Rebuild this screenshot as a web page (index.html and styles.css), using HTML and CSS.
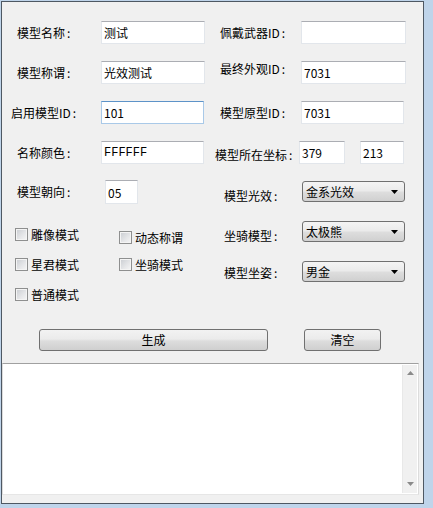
FILE: index.html
```html
<!DOCTYPE html>
<html lang="zh-CN">
<head>
<meta charset="utf-8">
<title>模型生成</title>
<link rel="stylesheet" href="styles.css">
</head>
<body>
<div class="win">
  <div class="cols">
    <div class="col col-left">
      <div class="row"><span class="lbl">模型名称<i class="colon">:</i></span><input class="field w104" value="测试"></div>
      <div class="row"><span class="lbl">模型称谓<i class="colon">:</i></span><input class="field w104" value="光效测试"></div>
      <div class="row"><span class="lbl lbl-wide">启用模型ID<i class="colon">:</i></span><input class="field w103 focus" value="101"></div>
      <div class="row"><span class="lbl">名称颜色<i class="colon">:</i></span><input class="field w103 mono" value="FFFFFF"></div>
      <div class="row"><span class="lbl m7">模型朝向<i class="colon">:</i></span><input class="field small" value="05"></div>
      <div class="checks">
        <label class="chk"><span class="box"></span>雕像模式</label>
        <label class="chk low"><span class="box"></span>动态称谓</label>
        <label class="chk"><span class="box"></span>星君模式</label>
        <label class="chk"><span class="box"></span>坐骑模式</label>
        <label class="chk"><span class="box"></span>普通模式</label>
      </div>
    </div>
    <div class="col col-right">
      <div class="row"><span class="rlbl">佩戴武器ID<i class="colon">:</i></span><input class="field w105" value=""></div>
      <div class="row"><span class="rlbl m4">最终外观ID<i class="colon">:</i></span><input class="field w105" value="7031"></div>
      <div class="row"><span class="rlbl">模型原型ID<i class="colon">:</i></span><input class="field w103" value="7031"></div>
      <div class="row"><span class="rlbl coord m10">模型所在坐标<i class="colon">:</i></span><input class="field w46" value="379"><input class="field w44 gap15" value="213"></div>
      <div class="row"><span class="rlbl sel m11">模型光效<i class="colon">:</i></span><div class="combo"><span>金系光效</span><svg class="arrow" width="7" height="4" viewBox="0 0 7 4"><path d="M0 0h7L3.5 4z" fill="#000"/></svg></div></div>
      <div class="row"><span class="rlbl sel m11">坐骑模型<i class="colon">:</i></span><div class="combo"><span>太极熊</span><svg class="arrow" width="7" height="4" viewBox="0 0 7 4"><path d="M0 0h7L3.5 4z" fill="#000"/></svg></div></div>
      <div class="row"><span class="rlbl sel m8">模型坐姿<i class="colon">:</i></span><div class="combo"><span>男金</span><svg class="arrow" width="7" height="4" viewBox="0 0 7 4"><path d="M0 0h7L3.5 4z" fill="#000"/></svg></div></div>
    </div>
  </div>
  <div class="actions">
    <button class="btn btn-gen">生成</button>
    <button class="btn btn-clear">清空</button>
  </div>
  <div class="output">
    <div class="text"></div>
    <div class="scroll">
      <svg width="7" height="4" viewBox="0 0 7 4"><path d="M3.5 0L7 4H0z" fill="#8a8a8a"/></svg>
      <svg width="7" height="4" viewBox="0 0 7 4"><path d="M0 0h7L3.5 4z" fill="#8a8a8a"/></svg>
    </div>
  </div>
</div>
</body>
</html>
```

FILE: styles.css
```css
* { box-sizing: border-box; }
html, body { margin: 0; padding: 0; }
body {
  width: 433px;
  height: 508px;
  background: #bfd4ea;
  padding: 1px 0 0 1px;
  font-family: "Noto Sans CJK SC", "Liberation Sans", sans-serif;
  font-size: 12px;
  color: #000;
  overflow: hidden;
}
.win {
  width: 423px;
  height: 503px;
  border: 1px solid #4e5863;
  background: #f0f0f0;
}
.cols {
  display: flex;
  margin-top: 11px;
}
.col-left { width: 208px; }
.col-right { flex: 1; }
.row {
  height: 40px;
  display: flex;
  align-items: flex-start;
}
.lbl, .rlbl {
  height: 23px;
  line-height: 23px;
  margin-top: 8px;
  white-space: nowrap;
}
.colon {
  font-style: normal;
  display: inline-block;
  padding-left: 2px;
}
.lbl { width: 99px; padding-left: 15px; }
.lbl-wide { padding-left: 9px; }
.rlbl { width: 91px; padding-left: 10px; }
.rlbl.coord { width: 89px; padding-left: 5px; }
.rlbl.sel { width: 92px; padding-left: 14px; }
.m4 { margin-top: 4px; }
.m7 { margin-top: 7px; }
.m8 { margin-top: 8px; }
.m10 { margin-top: 10px; }
.m11 { margin-top: 11px; }
.field {
  margin: 8px 0 0 0;
  height: 23px;
  padding: 0 2px;
  border: 1px solid #e2e6eb;
  border-top-color: #abadb3;
  background: #fff;
  font-family: "Noto Sans CJK SC", "Liberation Sans", sans-serif;
  font-size: 12px;
  color: #000;
  outline: none;
}
.w104 { width: 104px; }
.w103 { width: 103px; }
.w105 { width: 105px; }
.w46 { width: 46px; }
.w44 { width: 44px; }
.gap15 { margin-left: 15px; }
.focus { border-color: #a9c9e8; border-top-color: #5d93c8; }
.mono { font-family: "Liberation Mono", monospace; }
.small {
  width: 33px;
  height: 24px;
  margin-top: 7px;
  margin-left: 4px;
}
.combo {
  margin-top: 8px;
  width: 103px;
  height: 21px;
  border: 1px solid #707070;
  border-radius: 3px;
  background: linear-gradient(#f4f4f4 0%, #ebebeb 45%, #dddddd 55%, #d0d0d0 100%);
  display: flex;
  align-items: center;
  justify-content: space-between;
  padding: 0 6px 0 3px;
  line-height: 19px;
}
.arrow { display: block; }
.checks {
  padding: 15px 0 0 13px;
  display: grid;
  grid-template-columns: 104px auto;
  grid-auto-rows: 30px;
  align-items: start;
}
.chk {
  display: flex;
  align-items: center;
  gap: 3px;
  height: 13px;
  line-height: 13px;
  white-space: nowrap;
}
.chk.low { margin-top: 3px; }
.box {
  width: 13px;
  height: 13px;
  border: 1px solid #8e8f8f;
  background: linear-gradient(135deg, #c9ccd1 0%, #e6e7e9 60%, #f6f6f6 100%);
  box-shadow: inset 0 0 0 1px #f4f4f4;
}
.actions {
  display: flex;
  margin-top: 11px;
  height: 22px;
}
.btn {
  height: 22px;
  border: 1px solid #707070;
  border-radius: 3px;
  background: linear-gradient(#f2f2f2 0%, #ebebeb 45%, #dddddd 55%, #cfcfcf 100%);
  font-family: "Noto Sans CJK SC", "Liberation Sans", sans-serif;
  font-size: 12px;
  color: #000;
  padding: 0;
  line-height: 20px;
}
.btn-gen { width: 229px; margin-left: 37px; }
.btn-clear { width: 77px; margin-left: 36px; }
.output {
  margin-top: 12px;
  width: 417px;
  height: 132px;
  background: #fff;
  border-top: 1px solid #a0a0a0;
  border-left: 1px solid #dcdcdc;
  border-right: 1px solid #dcdcdc;
  border-bottom: 1px solid #e6e6e6;
  display: flex;
}
.text { flex: 1; }
.scroll {
  width: 15px;
  margin: 1px 1px 1px 0;
  background: #f0f0f0;
  border-left: 1px solid #e8e8e8;
  display: flex;
  flex-direction: column;
  align-items: center;
  justify-content: space-between;
  padding: 6px 0 7px;
}
.scroll svg { display: block; }
```
